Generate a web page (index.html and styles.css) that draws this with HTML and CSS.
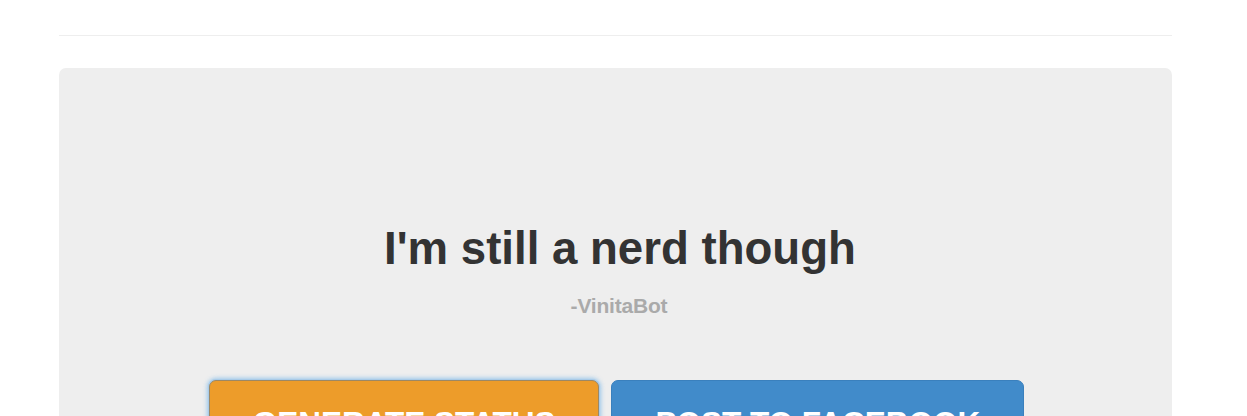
FILE: index.html
```html
<!DOCTYPE html>
<html lang="en">
<head>
    <meta charset="UTF-8">
    <meta name="viewport" content="width=device-width, initial-scale=1.0">
    <title>VinitaBot</title>
    <link rel="stylesheet" href="styles.css">
</head>
<body>
    <div class="container">
        <div class="header"></div>

        <div class="jumbotron">
            <h1 class="status">I'm still a nerd though</h1>
            <p class="author">-VinitaBot</p>
            <div class="actions">
                <button class="btn btn-generate">Generate Status</button>
                <button class="btn btn-facebook">Post to Facebook</button>
            </div>
        </div>
    </div>
</body>
</html>
```

FILE: styles.css
```css
* {
    margin: 0;
    padding: 0;
    box-sizing: border-box;
    font-family: 'Liberation Sans', Arial, sans-serif;
}

body {
    background: #fff;
    color: #333;
    overflow: hidden;
}

.container {
    width: 1113px;
    margin-left: 59px;
}

.header {
    height: 36px;
    border-bottom: 1px solid #eee;
}

.jumbotron {
    margin-top: 32px;
    background: #eee;
    border-radius: 7px;
    padding-top: 156px;
    height: 400px;
    text-align: center;
}

.status {
    padding-left: 9px;
    font-size: 45.6px;
    line-height: 50px;
    font-weight: bold;
    color: #333;
}

.author {
    padding-left: 7px;
    margin-top: 20px;
    font-size: 21px;
    line-height: 24px;
    font-weight: bold;
    color: #aaa;
    letter-spacing: -0.2px;
}

.actions {
    margin-top: 62px;
    display: flex;
    justify-content: center;
    gap: 12px;
    padding-left: 2px;
}

.btn {
    font-size: 31.5px;
    line-height: 42px;
    font-weight: bold;
    text-transform: uppercase;
    color: #fff;
    padding: 21px 43px 19px;
    border-radius: 7px;
    border: 1px solid transparent;
    cursor: pointer;
}

.btn-generate {
    background: #ed9c2a;
    border-color: #9c8866;
    box-shadow: 0 0 0 1px #a9cbe8, 0 0 4px 2px rgba(102, 175, 233, 0.6);
}

.btn-facebook {
    background: #418bca;
    border-color: #3a80bd;
}
```
